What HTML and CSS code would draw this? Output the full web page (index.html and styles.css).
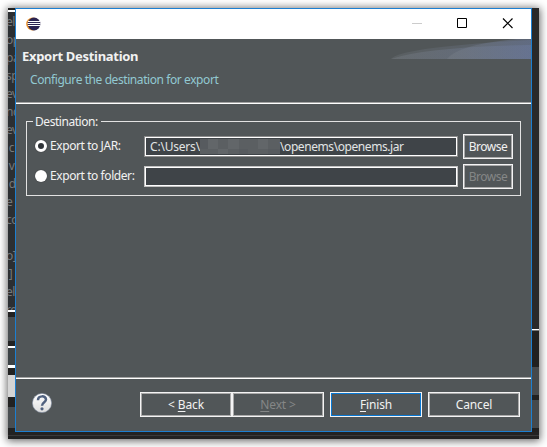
FILE: index.html
```html
<!DOCTYPE html>
<html lang="en">
<head>
<meta charset="utf-8">
<title>Export Destination</title>
<link rel="stylesheet" href="styles.css">
</head>
<body>
<div class="backdrop">
  <div class="editor-left">
    <div class="editor-top"></div>
    <div class="code">
      <span>el</span><span>op</span><span>pa</span><span>sp</span><span>ev</span><span>nc</span><span>ev</span><span>&nbsp;c</span><span>&nbsp;v</span><span>&nbsp;d</span><span>e e</span><span>co</span><span></span><span>o]</span><span>&nbsp;]</span><span>el</span><span>re</span>
    </div>
    <div class="panels-left"></div>
  </div>
  <main class="dialog">
    <header class="titlebar">
      <svg class="logo" width="15" height="14" viewBox="0 0 15 14"><circle cx="6.600" cy="7" r="6.500" fill="#f29a32"/><circle cx="8" cy="7" r="6.400" fill="#2b2350"/><path d="M2 4.500h12M1.500 6.500h13M2 8.500h12" stroke="#fff" stroke-width="1"/></svg>
      <svg class="controls" width="102" height="12" viewBox="0 0 102 12"><path d="M0 5.5h10" stroke="#ccc"/><path d="M45.500 .5h9v9h-9z" fill="none" stroke="#000"/><path d="M91 .5l9.500 9.500M100.500 .5L91 10" stroke="#000" stroke-width="1.200"/></svg>
    </header>
    <section class="banner">
      <div><h1>Export Destination</h1><p>Configure the destination for export</p></div>
      <svg class="swoosh" width="140" height="20" viewBox="0 0 140 20">
        <defs><linearGradient id="g"><stop offset="0" stop-color="#80868c" stop-opacity=".5"/><stop offset="1" stop-color="#7080aa" stop-opacity=".6"/></linearGradient></defs>
        <path d="M0 20Q10 8 140 1V20z" fill="url(#g)" opacity=".4"/>
        <path d="M0 20Q35 8 140 6V20z" fill="url(#g)" opacity=".6"/>
        <path d="M56 20Q68 5 126 0H140V20z" fill="url(#g)" opacity=".6"/>
      </svg>
    </section>
    <section class="content">
      <div class="group">
        <div class="legend">Destination:</div>
        <div class="row">
          <i class="radio checked"></i><label>Export to JAR:</label>
          <div class="field"><span class="users">C:\Users\</span><svg class="redacted" width="80" height="15" viewBox="0 0 80 15"><path fill="#5b5f62" d="M0 0h80v15H0z"/><path fill="#626669" d="M8 0h10v10H8zM28 0h11v10H28zM58 0h10v10H58zM18 10h10v5H18z"/><path fill="#575b5f" d="M0 0h8v10H0zM39 10h9v5h-9zM68 10h12v5H68z"/></svg><span>\openems\openems.jar</span></div>
          <div class="button browse">Browse</div>
        </div>
        <div class="row">
          <i class="radio"></i><label>Export to folder:</label>
          <div class="field empty"></div>
          <div class="button browse disabled">Browse</div>
        </div>
      </div>
    </section>
    <footer class="actions">
      <svg class="help" width="20" height="20" viewBox="0 0 20 20"><defs><linearGradient id="h" x2="0" y2="1"><stop stop-color="#fff"/><stop offset="1" stop-color="#dedede"/></linearGradient></defs><circle cx="10" cy="10" r="9.600" fill="url(#h)" stroke="#8490a5" stroke-width=".6"/><path d="M6 7.200C6 2.200 14 2.200 14 6.600C14 9.300 10 9.200 10 12.800" fill="none" stroke="#50617f" stroke-width="2.500"/><circle cx="10" cy="15.800" r="1.600" fill="#50617f"/></svg>
      <div class="button">&lt; <u>B</u>ack</div><div class="button disabled"><u>N</u>ext &gt;</div><div class="button finish"><u>F</u>inish</div><div class="button cancel">Cancel</div>
    </footer>
  </main>
  <div class="editor-right"></div>
  <div class="editor-bottom"></div>
</div>
</body>
</html>
```
FILE: styles.css
```css
* { box-sizing: border-box; }
body { margin: 0; padding: 8px; background: #fff; font: 12px/16px "Noto Sans", sans-serif; letter-spacing: -.42px; color: #f2f2f2; overflow: hidden; }
.backdrop { width: 531px; height: 431px; display: grid; grid-template: 424px 7px / 7px 517px 7px; background: #222; box-shadow: 0 1px 8px 1px rgba(0,0,0,.6); }
.editor-left { overflow: hidden; background: #2c2f32; }
.editor-top { height: 5px; background: linear-gradient(#222 2px, #fff 2px, #fff 4px, #2c2f32 4px); }
.code { height: 297px; overflow: hidden; color: #77797a; }
.code span { display: block; height: 18px; line-height: 18px; white-space: pre; margin-left: -2px; }
.panels-left { height: 122px; background: linear-gradient(#fff 0 2px, #222 2px 7px, #494e51 7px 31px, #222 31px 36px, #fff 36px 38px, #3c4245 38px 55px, #fff 55px 58px, #222 58px 65px, #d5d5d5 65px 87px, #222 87px 97px, #494e51 97px 118px, #222 118px); }
.dialog { border: 1px solid #1c7fd1; background: #515658; display: flex; flex-direction: column; min-width: 0; }
.titlebar { height: 30px; background: #fff; display: flex; justify-content: space-between; padding: 9px 17px 0 10px; }
.logo { margin-top: -1px; }
.controls { display: block; }
.banner { height: 65px; border-bottom: 1px solid #fff; box-shadow: inset 0 -1px #a3a3a3; display: flex; justify-content: space-between; padding-left: 6px; }
.banner h1 { margin: 9px 0 7px; font-size: 13px; line-height: 17px; letter-spacing: -.3px; white-space: nowrap; }
.banner p { margin: 0 0 0 8px; color: #92c9d2; white-space: nowrap; }
.swoosh { display: block; }
.content { height: 276px; padding: 17px 10px; border-bottom: 1px solid #fff; box-shadow: inset 0 -1px #a3a3a3; }
.group { height: 75px; border: 1px solid #e2e2e2; padding: 0 7px; }
.legend { width: 68px; height: 13px; margin: -1px 0 0 -1px; background: #515658; padding: 1px 0 0 2px; line-height: 0; letter-spacing: -.45px; white-space: nowrap; }
.row { display: flex; align-items: center; height: 25px; margin-bottom: 5px; }
.radio { width: 12px; height: 12px; margin: -1px 0 0 1px; border-radius: 50%; background: #fff; box-shadow: 0 0 1px #222; flex: none; }
.checked { background: #303438; border: 3px solid #fff; }
label { width: 94px; margin: -1px 0 0 3px; white-space: nowrap; flex: none; }
.field { width: 314px; height: 21px; border: 1px solid #8c8c8c; box-shadow: inset 0 0 0 1px #fff; background: #3f4448; display: flex; align-items: center; padding: 1px 0 0 5px; color: #e2e5e5; white-space: nowrap; flex: none; }
.users { width: 50px; letter-spacing: -.2px; }
.redacted { flex: none; }
.empty { border-color: #c2c2c2; }
.button { width: 92px; height: 25px; border: 1px solid #f4f4f4; box-shadow: inset 0 0 0 1px #aaa; display: flex; align-items: center; justify-content: center; white-space: pre; letter-spacing: -.15px; padding-top: 1px; flex: none; }
.button u { text-underline-offset: 2px; }
.browse { width: 50px; margin-left: 5px; letter-spacing: -.5px; }
.disabled { color: #858787; }
.actions { height: 52px; padding: 13px 11px 0 16px; display: flex; }
.help { margin: 1px 88px 0 0; flex: none; }
.finish { margin-left: 6px; box-shadow: inset 0 0 0 1px #0878d4; }
.cancel { margin-left: 6px; }
.editor-right { background: linear-gradient(#292929 0 321px, #fff 321px 322px, #777 322px 323px, #202020 323px 359px, #45494c 359px 387px, #202020 387px 392px, #45494c 392px 420px, #202020 420px); }
.editor-bottom { grid-column: 1 / 4; background: linear-gradient(#222 3px, #3a3a3a 3px 4px, #222 4px); }
```
